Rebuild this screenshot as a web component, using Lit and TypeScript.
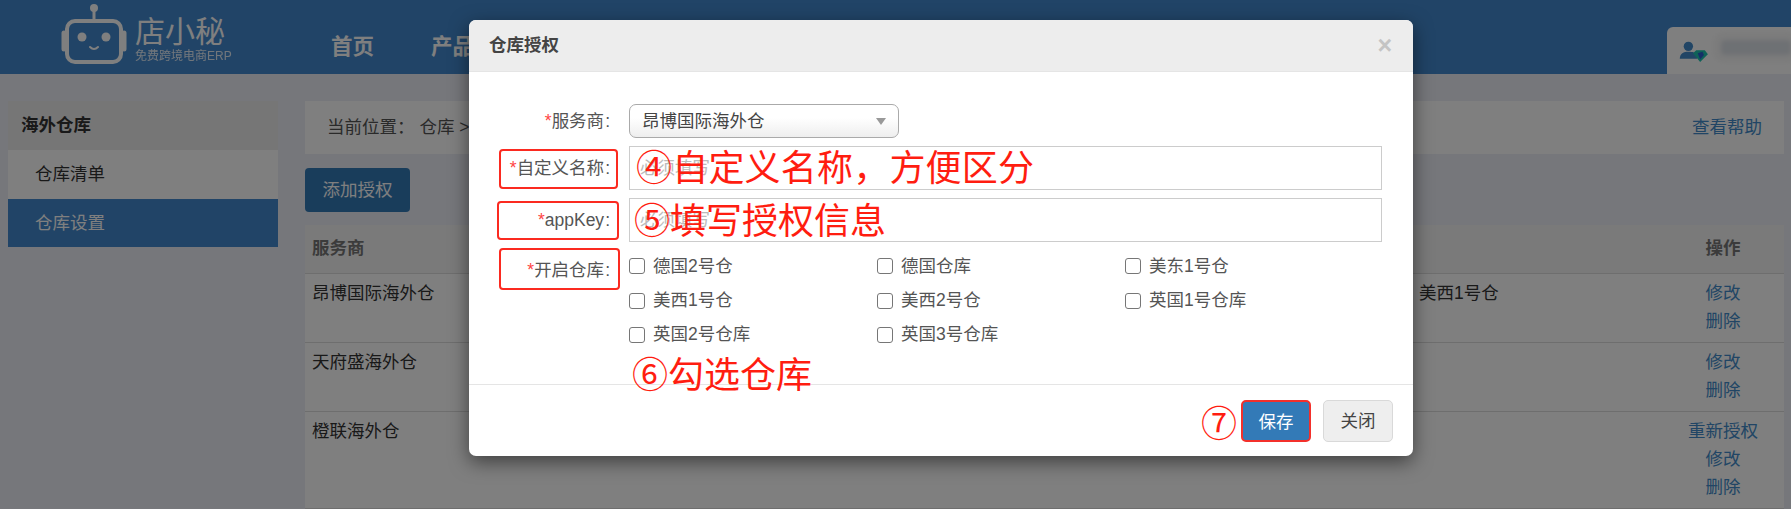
import { LitElement, html, css } from "lit";
import { customElement } from "lit/decorators.js";

const stores = ["德国2号仓","德国仓库","美东1号仓","美西1号仓","美西2号仓","英国1号仓库","英国2号仓库","英国3号仓库"];

@customElement("app-root")
export class AppRoot extends LitElement {
  static styles = css`
    :host { display:block; position:relative; height:509px; overflow:hidden; background:#eceff6; color:#333;
      font:17.5px/25px "Liberation Sans","Noto Sans CJK SC",sans-serif; }
    * { box-sizing:border-box; }
    a { color:#428bca; text-decoration:none; }
    .top { height:74px; background:#4288ce; display:flex; align-items:flex-start; }
    .logo { width:250px; height:74px; margin-left:54px; display:flex; gap:7px; flex:none; }
    .logo svg { flex:none; margin-top:3px; }
    .brand { color:#fff; display:flex; flex-direction:column; padding-top:15px; }
    .brand b { font-weight:400; font-size:30px; line-height:34px; }
    .brand span { font-size:12px; line-height:14px; opacity:.85; white-space:nowrap; }
    .nav { display:flex; gap:57px; margin-left:27px; padding-top:35px; color:#fff; font-size:21.5px; font-weight:700; flex:1; }
    .user { width:124px; height:47px; margin-top:27px; background:#fff; border-radius:6px 0 0 0; display:flex; align-items:center; padding-left:12px; flex:none; overflow:hidden; }
    .user i { display:block; width:90px; height:15px; margin:-6px 0 0 12px; background:#dde2e8; filter:blur(2px); box-shadow:0 0 0 8px #f8f8f8; border-radius:4px; }
    .wrap { display:flex; gap:27px; padding:27px 7px 0 8px; }
    .side { width:270px; flex:none; }
    .side h3 { margin:0; height:49px; padding:12px 13px; background:#ececec; font-size:17.5px; color:#333; }
    .side div { height:48.5px; padding:12px 27px; background:#fff; }
    .side div.on { background:#4288ce; color:#fff; }
    .main { flex:1; min-width:0; }
    .crumb { height:53px; background:#fff; display:flex; justify-content:space-between; align-items:center; padding:0 22px; color:#555; }
    .crumb span span { margin-left:5px; }
    .add { display:block; width:105px; height:44px; margin:14px 0 13px; background:#337ab7; color:#fff; border-radius:4px; text-align:center; line-height:44px; }
    .row { display:grid; grid-template-columns:1107px 250px 122px; background:#fff; border-top:1px solid #ddd; padding:5px 0 7px; }
    .row > * { padding-left:7px; }
    .row.head { height:48px; border-top:0; background:#f5f5f5; color:#777; font-weight:700; padding:11px 0; }
    .row.head .ophead { text-align:center; padding:0; }
    .row .op { padding:0; text-align:center; display:flex; flex-direction:column; line-height:28px; }
    .row .name { line-height:28px; }
    .row.last { height:60px; }
    .shade { position:absolute; inset:0; background:rgba(0,0,0,.5); }
    .modal { position:absolute; left:469px; top:20px; width:944px; height:436px; background:#fff; border-radius:7px; box-shadow:0 6px 19px rgba(0,0,0,.5); display:flex; flex-direction:column; color:#555; }
    .mh { height:52px; background:#ededed; border-bottom:1px solid #e5e5e5; border-radius:7px 7px 0 0; display:flex; justify-content:space-between; align-items:center; padding:0 21px 0 20px; flex:none; }
    .mh b { color:#444; font-size:17.5px; }
    .mh span { color:#c4c4c4; font:700 25px/25px "Liberation Sans",sans-serif; }
    .form { flex:1; padding:32px 31px 0 0; display:grid; grid-template-columns:141px 1fr; column-gap:19px; row-gap:8px; align-content:start; }
    .lab { text-align:right; line-height:34px; white-space:nowrap; }
    .lab em { color:#f44; font-style:normal; }
    .lab u { text-decoration:none; margin-left:1px; }
    .lab.tall { line-height:44px; }
    .lab.low { line-height:40px; }
    .sel { width:270px; height:34px; border:1px solid #aaa; border-radius:7px; background:linear-gradient(#fff 40%,#eee); display:flex; justify-content:space-between; align-items:center; padding:0 12px 0 12px; color:#444; }
    .sel i { width:0; height:0; border:5.5px solid transparent; border-top:7px solid #999; border-bottom:0; }
    input[type=text] { display:block; width:100%; height:44px; border:1px solid #ccc; padding:0 10px; font:inherit; outline:0; }
    input::placeholder { color:#bbb; }
    .checks { display:grid; grid-template-columns:repeat(3,248px); grid-auto-rows:34.4px; margin-top:-1px; }
    .checks label { display:flex; align-items:center; gap:8px; white-space:nowrap; }
    .checks input { appearance:none; width:16px; height:16px; margin:0; border:1px solid #767676; border-radius:3px; background:#fff; flex:none; }
    .mf { height:72px; border-top:1px solid #e5e5e5; display:flex; justify-content:flex-end; align-items:center; gap:12px; padding:0 20px 0 0; flex:none; }
    .btn { width:70px; height:42px; border-radius:5px; text-align:center; line-height:40px; border:1px solid #d9d9d9; background:#eee; color:#444; }
    .btn.save { background:#337ab7; color:#fff; border:2px solid #f3302b; }
    .box { position:absolute; border:2px solid #fb2a20; border-radius:4px; }
    .b1 { left:30px; top:129px; width:119px; height:40px; }
    .b2 { left:28px; top:181px; width:122px; height:39px; }
    .b3 { left:30px; top:228px; width:121px; height:42px; }
    .note { position:absolute; color:#ff1d10; font:36px/44px "Noto Sans CJK SC",sans-serif; white-space:nowrap; }
    .n1 { left:167px; top:123px; letter-spacing:.2px; }
    .n2 { left:165px; top:176px; }
    .n3 { left:163px; top:330px; }
    .n4 { left:732px; top:379px; }
  `;

  render() {
    return html`
      <div class="top">
        <div class="logo">
          <svg width="74" height="66" viewBox="0 0 74 66" fill="none" stroke="#fff" stroke-width="4">
            <circle cx="40" cy="5" r="4" fill="#fff" stroke="none"/>
            <path d="M40 8v8" stroke-width="3"/>
            <rect x="13" y="18" width="54" height="41" rx="8"/>
            <path d="M10 30v16M70 30v16" stroke-width="5" stroke-linecap="round"/>
            <circle cx="28" cy="34" r="4.5" fill="#fff" stroke="none"/>
            <circle cx="52" cy="34" r="4.5" fill="#fff" stroke="none"/>
            <path d="M36 44q4 4 8 0" stroke-width="2" stroke-linecap="round"/>
          </svg>
          <div class="brand"><b>店小秘</b><span>免费跨境电商ERP</span></div>
        </div>
        <div class="nav"><span>首页</span><span>产品</span></div>
        <div class="user">
          <svg width="38" height="30" viewBox="0 0 38 30">
            <circle cx="12" cy="9" r="6" fill="#428bca"/>
            <path d="M1 25c0-7 5-9 11-9s9 1 11 4v5z" fill="#428bca"/>
            <path d="M18 18l4-4h11l4 5-10 10z" fill="#1fc4b0"/>
            <path d="M24 18l6-2 2 4-5 6z" fill="#2a5fd0"/>
          </svg>
          <i></i>
        </div>
      </div>
      <div class="wrap">
        <div class="side">
          <h3>海外仓库</h3>
          <div>仓库清单</div>
          <div class="on">仓库设置</div>
        </div>
        <div class="main">
          <div class="crumb"><span>当前位置：<span>仓库 &gt;</span></span><a href="#">查看帮助</a></div>
          <div class="add">添加授权</div>
          <div class="row head"><span>服务商</span><span></span><span class="ophead">操作</span></div>
          ${[["昂博国际海外仓","美西1号仓",false],["天府盛海外仓","",false],["橙联海外仓","",true]].map(([n,s,re]) => html`
            <div class="row">
              <span class="name">${n}</span><span class="name">${s}</span>
              <span class="op">${re ? html`<a href="#">重新授权</a>` : ""}<a href="#">修改</a><a href="#">删除</a></span>
            </div>`)}
          <div class="row last"></div>
        </div>
      </div>
      <div class="shade"></div>
      <div class="modal">
        <div class="mh"><b>仓库授权</b><span>×</span></div>
        <div class="form">
          <div class="lab"><em>*</em>服务商<u>:</u></div>
          <div class="sel">昂博国际海外仓<i></i></div>
          <div class="lab tall"><em>*</em>自定义名称<u>:</u></div>
          <input type="text" placeholder="必须填写" />
          <div class="lab tall"><em>*</em>appKey<u>:</u></div>
          <input type="text" placeholder="必须填写" />
          <div class="lab low"><em>*</em>开启仓库<u>:</u></div>
          <div class="checks">
            ${stores.map((s) => html`<label><input type="checkbox" />${s}</label>`)}
          </div>
        </div>
        <div class="mf"><div class="btn save">保存</div><div class="btn">关闭</div></div>
        <div class="box b1"></div><div class="box b2"></div><div class="box b3"></div>
        <div class="note n1">④自定义名称，方便区分</div>
        <div class="note n2">⑤填写授权信息</div>
        <div class="note n3">⑥勾选仓库</div>
        <div class="note n4">⑦</div>
      </div>
    `;
  }
}
